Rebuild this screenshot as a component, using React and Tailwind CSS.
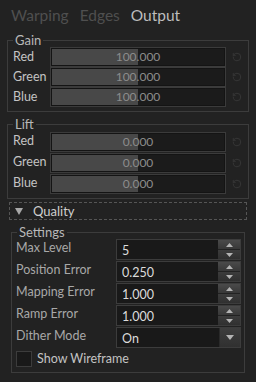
import { RotateCcw } from 'lucide-react';

const font = { fontFamily: 'Lato, "Open Sans", sans-serif' };

const SliderRow = ({ label, value, h }) => (
  <div className={`flex items-center ${h}`}>
    <span className="w-[42px] pl-[5px] text-[12.5px] text-[#c4c4c4] leading-none">{label}</span>
    <div className="relative w-[176px] h-[20px] border border-[#3b3b3b] bg-[#1b1b1b] shadow-[inset_0_0_0_1px_#141414]">
      <div className="absolute left-[1px] top-[1px] bottom-[1px] w-[86px] bg-[#484848]" />
      <div className="absolute inset-0 flex items-center justify-center text-[12px] text-[#8c8c8c] leading-none">
        {value}
      </div>
    </div>
    <div className="flex-1 flex justify-center pr-[1px]">
      <RotateCcw size={10} strokeWidth={2} className="text-[#3a3a3a]" />
    </div>
  </div>
);

const Group = ({ title, className = '', children }) => (
  <fieldset className={`border border-[#3c3c3c] ${className}`}>
    <legend className="ml-[5px] px-[2px] text-[13px] leading-[14px] text-[#b8b8b8]">{title}</legend>
    {children}
  </fieldset>
);

const Spin = ({ label, value, combo }) => (
  <div className="flex items-start h-[22px]">
    <span className="w-[104px] pl-[4px] pt-[3px] text-[12.5px] text-[#a8a8a8] leading-none">{label}</span>
    <div className="flex w-[125px] h-[21px] border border-[#3c3c3c] bg-[#191919]">
      <div className="flex-1 flex items-center pl-[5px] pt-[3px] text-[12.5px] text-[#dcdcdc] leading-none">
        {value}
      </div>
      {combo ? (
        <div className="w-[21px] flex items-center justify-center bg-gradient-to-b from-[#3e3e3e] to-[#303030] border-l border-[#2a2a2a]">
          <svg width="8" height="5" viewBox="0 0 8 5"><path d="M0 0h8L4 5z" fill="#b4b4b4" /></svg>
        </div>
      ) : (
        <div className="w-[22px] flex flex-col">
          <div className="flex-1 flex items-center justify-center bg-gradient-to-b from-[#4a4a4a] to-[#383838] border-b border-[#222]">
            <svg width="7" height="4" viewBox="0 0 7 4"><path d="M3.5 0L7 4H0z" fill="#b4b4b4" /></svg>
          </div>
          <div className="flex-1 flex items-center justify-center bg-gradient-to-b from-[#3c3c3c] to-[#303030]">
            <svg width="7" height="4" viewBox="0 0 7 4"><path d="M0 0h7L3.5 4z" fill="#b4b4b4" /></svg>
          </div>
        </div>
      )}
    </div>
  </div>
);

export default function App() {
  return (
    <div className="w-[256px] h-[382px] bg-[#222222] overflow-hidden" style={font}>
      <div className="flex items-center h-[31px] pl-[11px] gap-[11px] text-[15.5px] leading-none">
        <span className="text-[#4f4f4f]">Warping</span>
        <span className="text-[#4f4f4f]">Edges</span>
        <span className="text-[#bdbdbd]">Output</span>
      </div>

      <Group title="Gain" className="mx-[7px] mt-[2px] pb-[4px]">
        <div className="flex flex-col">
          <SliderRow label="Red" value="100.000" h="h-[20px]" />
          <SliderRow label="Green" value="100.000" h="h-[20px]" />
          <SliderRow label="Blue" value="100.000" h="h-[20px]" />
        </div>
      </Group>

      <Group title="Lift" className="mx-[7px] mt-[5px] pb-[4px]">
        <div className="flex flex-col">
          <SliderRow label="Red" value="0.000" h="h-[21px]" />
          <SliderRow label="Green" value="0.000" h="h-[21px]" />
          <SliderRow label="Blue" value="0.000" h="h-[21px]" />
        </div>
      </Group>

      <div className="mx-[9px] mt-[3px] h-[18px] border border-dashed border-[#555] flex items-center pl-[5px]">
        <svg width="8" height="7" viewBox="0 0 8 7"><path d="M0 0h8L4 7z" fill="#a8a8a8" /></svg>
        <span className="ml-[10px] text-[13px] text-[#cfcfcf] leading-none">Quality</span>
      </div>

      <Group title="Settings" className="mx-[11px] mt-[5px] pb-[5px]">
        <div className="flex flex-col">
          <Spin label="Max Level" value="5" />
          <Spin label="Position Error" value="0.250" />
          <Spin label="Mapping Error" value="1.000" />
          <Spin label="Ramp Error" value="1.000" />
          <Spin label="Dither Mode" value="On" combo />
          <div className="flex items-center h-[16px] pl-[4px] mt-[2px]">
            <div className="w-[16px] h-[16px] border border-[#3c3c3c] bg-[#191919]" />
            <span className="ml-[5px] text-[12.5px] text-[#c4c4c4] leading-none">Show Wireframe</span>
          </div>
        </div>
      </Group>
    </div>
  );
}
